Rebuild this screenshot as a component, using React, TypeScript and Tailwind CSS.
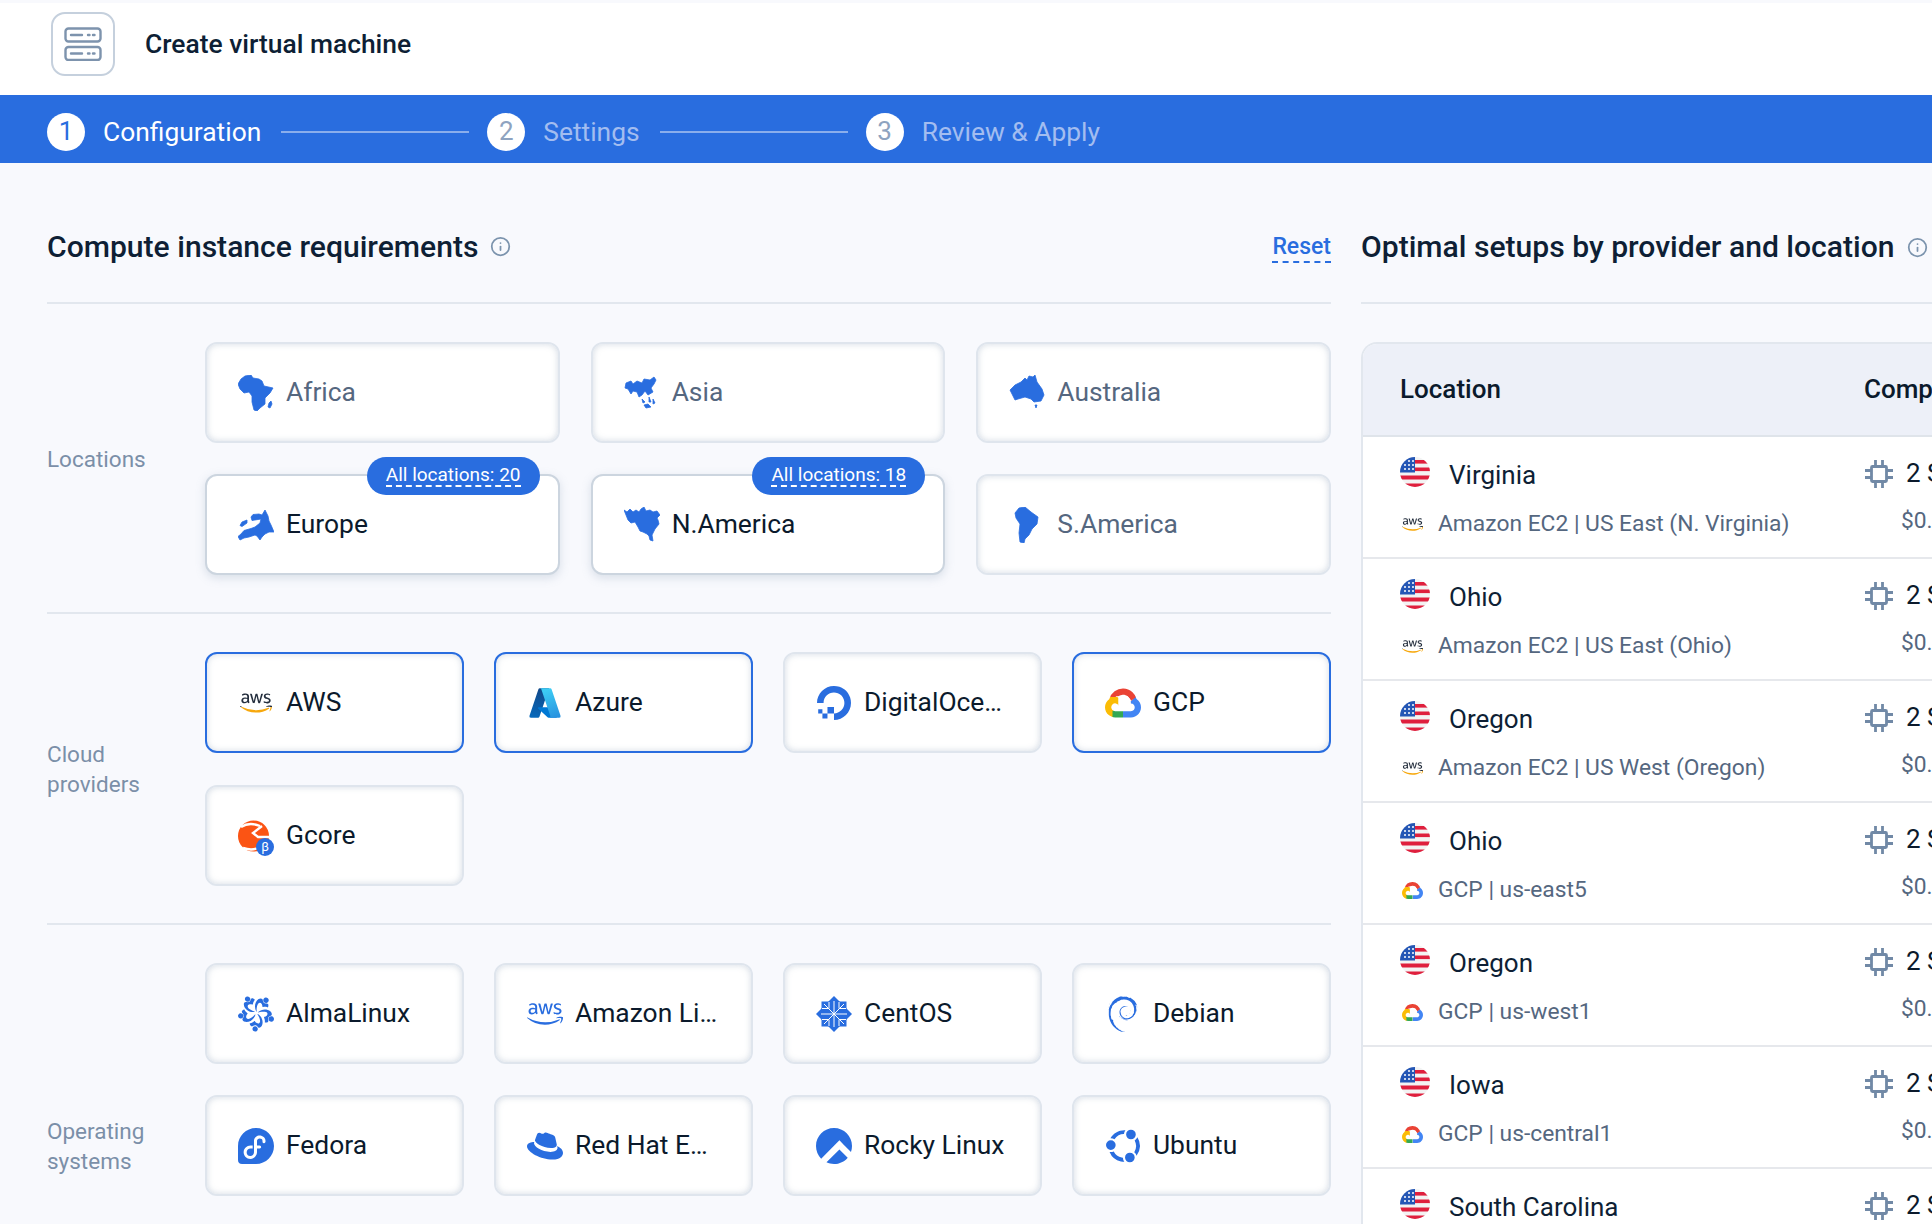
import type { ReactNode } from 'react';
import { Info } from 'lucide-react';
import { FaAws } from 'react-icons/fa';
import {
  SiAlmalinux,
  SiDebian,
  SiDigitalocean,
  SiFedora,
  SiRedhat,
  SiRockylinux,
  SiUbuntu,
} from 'react-icons/si';

const BLUE = '#296ddf';

const ServerIcon = () => (
  <svg width="38" height="34" viewBox="0 0 38 34" fill="none" stroke="#7d93ad" strokeWidth="2.4" strokeLinecap="round">
    <rect x="1.5" y="1.5" width="35" height="13" rx="3" />
    <rect x="1.5" y="20" width="35" height="13" rx="3" />
    <path d="M7 8h11M24 8h1.5M29 8h1.5M7 26.5h11M24 26.5h1.5M29 26.5h1.5" />
  </svg>
);

const CpuIcon = () => (
  <svg width="30" height="30" viewBox="0 0 30 30" fill="none" stroke="#7189a6" strokeWidth="2.8" className="shrink-0">
    <rect x="7.5" y="7.5" width="15" height="15" rx="1" />
    <path d="M11.5 1v6M18.5 1v6M11.5 23v6M18.5 23v6M1 11.5h6M1 18.5h6M23 11.5h6M23 18.5h6" />
  </svg>
);

const UsFlag = () => (
  <svg width="30" height="30" viewBox="0 0 30 30" className="shrink-0">
    <defs>
      <clipPath id="flag-circle">
        <circle cx="15" cy="15" r="15" />
      </clipPath>
    </defs>
    <g clipPath="url(#flag-circle)">
      <rect width="30" height="30" fill="#f3f3f3" />
      <rect y="3" x="12" width="18" height="3.6" fill="#df1f3d" />
      <rect y="10.5" x="12" width="18" height="3.6" fill="#df1f3d" />
      <rect y="18.5" width="30" height="4" fill="#df1f3d" />
      <rect y="26.5" width="30" height="4" fill="#df1f3d" />
      <rect width="15" height="15.5" fill="#2456b5" />
      <g fill="#fff">
        <circle cx="5" cy="8" r="1" />
        <circle cx="9" cy="8" r="1" />
        <circle cx="13" cy="8" r="1" />
        <circle cx="5" cy="12" r="1" />
        <circle cx="9" cy="12" r="1" />
        <circle cx="13" cy="12" r="1" />
        <circle cx="9" cy="4" r="1" />
        <circle cx="13" cy="4" r="1" />
      </g>
    </g>
  </svg>
);

// continents, hand traced in a 36 box
const continents: Record<string, string[]> = {
  Africa: [
    'M7 1L13 0L15 3L21 4L24 6L26 11L35 13L32 18L27 23L27 29L22 33L19 36L16 35L14 27L14 21L11 17L6 18L2 14L0 9L3 4Z',
    'M33 26L34 29L32 33L30 32L31 28Z',
  ],
  Asia: [
    'M2 8L7 6L9 9L13 6L18 8L20 4L26 5L30 2L32 5L30 9L27 13L29 17L24 20L21 16L18 20L15 22L13 17L9 16L7 19L4 14L1 13Z',
    'M18 24L21 27L19 28Z',
    'M25 22L27 27L25 27Z',
    'M20 30L24 29L27 32L22 33Z',
    'M29 24L31 28L29 29Z',
  ],
  Australia: [
    'M16 3L18 5L20 1L24 2L26 0L28 7L33 14L35 20L32 26L25 27L22 24L16 22L9 24L6 25L3 19L1 15L6 10L12 7Z',
    'M26 30L28 30L27 33Z',
  ],
  Europe: [
    'M27 3L30 9L31 14L33 18L36 25L31 25L27 27L24 30L22 33L19 29L17 28L11 30L6 31L2 33L0 29.5L3 27L6 23.5L13 21.5L17 20L22 16L23 12L14 13.5L13 10L15 7.5L21 7L24 8Z',
    'M2 18.5L4 15L9 13L9 16L4 19.5Z',
  ],
  'N.America': [
    'M0 3L3 5L6 2L9 5L12 3L15 5L17 2L20 0L22 4L26 3L29 5L33 4L36 8L33 11L34 13L35 17L31 22L28 28L29 34L26 33L25 29L23 27L19 25L16 24L14 20L11 15L7 16L4 13L2 8Z',
  ],
  'S.America': [
    'M10 1L16 0L22 5L29 10L28 17L23 22L20 28L16 32L15 36L11 35L10 26L11 17L7 11L6 6Z',
  ],
};

const Continent = ({ name }: { name: string }) => (
  <svg width="36" height="36" viewBox="0 0 36 36" fill={BLUE} stroke={BLUE} strokeWidth="0.8" strokeLinejoin="round">
    {continents[name].map((d) => (
      <path key={d} d={d} />
    ))}
  </svg>
);

const CentosLogo = () => (
  <svg width="36" height="36" viewBox="0 0 36 36">
    <g fill={BLUE}>
      <rect x="5.5" y="5.5" width="25" height="25" />
      {[0, 90, 180, 270].map((r) => (
        <path key={r} transform={`rotate(${r} 18 18)`} d="M18 0L24 6H12Z" />
      ))}
    </g>
    <g stroke="#fff" strokeWidth="1" fill="none">
      <path d="M18 5V31M5 18H31M8 8L28 28M28 8L8 28" />
      <path d="M13 6V12.5H6M23 6V12.5H30M13 30V23.5H6M23 30V23.5H30" />
    </g>
  </svg>
);

const AwsLogo = ({ size = 32 }: { size?: number }) => (
  <span className="relative inline-flex">
    <FaAws size={size} color="#252f3e" className="[clip-path:inset(0_0_36%_0)]" />
    <FaAws size={size} color="#f7a80d" className="absolute left-0 top-0 [clip-path:inset(64%_0_0_0)]" />
  </span>
);

const AzureLogo = () => (
  <svg width="34" height="34" viewBox="0 0 96 96">
    <defs>
      <linearGradient id="az-a" x1="38" y1="12" x2="12" y2="90" gradientUnits="userSpaceOnUse">
        <stop stopColor="#114a8b" />
        <stop offset="1" stopColor="#0669bc" />
      </linearGradient>
      <linearGradient id="az-b" x1="60" y1="10" x2="88" y2="86" gradientUnits="userSpaceOnUse">
        <stop stopColor="#3ccbf4" />
        <stop offset="1" stopColor="#2892df" />
      </linearGradient>
    </defs>
    <path fill="url(#az-a)" d="M33.338 6.544h26.038l-27.03 80.087a4.152 4.152 0 0 1-3.933 2.824H8.149a4.145 4.145 0 0 1-3.928-5.47L29.404 9.368a4.152 4.152 0 0 1 3.934-2.825z" />
    <path fill="#0078d4" d="M71.175 60.261h-41.29a1.911 1.911 0 0 0-1.305 3.309l26.532 24.764a4.171 4.171 0 0 0 2.846 1.121h23.38z" />
    <path fill="url(#az-b)" d="M66.595 9.364a4.145 4.145 0 0 0-3.928-2.82H33.648a4.146 4.146 0 0 1 3.928 2.82l25.184 74.62a4.146 4.146 0 0 1-3.928 5.472h29.02a4.146 4.146 0 0 0 3.927-5.472z" />
  </svg>
);

const GCP_PATH =
  'M12.19 2.38a9.344 9.344 0 0 0-9.234 6.893c.053-.02-.055.013 0 0-3.875 2.551-3.922 8.11-.247 10.941l.006-.007-.007.03a6.717 6.717 0 0 0 4.077 1.356h5.173l.03.03h5.192c6.687.053 9.376-8.605 3.835-12.35a9.365 9.365 0 0 0-2.821-4.552l-.043.043.006-.05A9.344 9.344 0 0 0 12.19 2.38zm-.358 4.146c1.244-.04 2.518.368 3.486 1.15a5.186 5.186 0 0 1 1.862 4.078v.518c3.53-.07 3.53 5.262 0 5.193h-5.193l-.008.009v-.04H6.785a2.59 2.59 0 0 1-1.067-.23h.001a2.597 2.597 0 1 1 3.437-3.437l3.013-3.012A6.747 6.747 0 0 0 8.11 8.24c.018-.01.04-.026.054-.023a5.186 5.186 0 0 1 3.67-1.69z';

const GcpLogo = ({ size = 36 }: { size?: number }) => (
  <svg width={size} height={size} viewBox="0 0 24 24">
    <defs>
      <clipPath id="gc-red"><path d="M3 0H24V5.5L17.5 10.5L15 7.5H7L8 8.4L3 9.6Z" /></clipPath>
      <clipPath id="gc-blue"><path d="M17 11L24 4V24H12V17L17 16Z" /></clipPath>
      <clipPath id="gc-yellow"><path d="M0 8H9L9 15.5L5.7 17.5L5.5 24H0Z" /></clipPath>
      <clipPath id="gc-green"><path d="M5 17.2L12 17.2V24H5Z" /></clipPath>
    </defs>
    <path d={GCP_PATH} fill="#4285f4" clipPath="url(#gc-blue)" />
    <path d={GCP_PATH} fill="#ea4335" clipPath="url(#gc-red)" />
    <path d={GCP_PATH} fill="#fbbc05" clipPath="url(#gc-yellow)" />
    <path d={GCP_PATH} fill="#34a853" clipPath="url(#gc-green)" />
  </svg>
);

const GcoreLogo = () => (
  <span className="relative inline-flex h-9 w-9">
    <svg width="31" height="36" viewBox="0 0 31 36">
      <circle cx="15.5" cy="18" r="15.5" fill="#fb5414" />
      <g fill="none" stroke="#fff" strokeWidth="2.4">
        <path d="M3 9C9 5 15 5 22 8" />
        <path d="M5 30C11 32 17 32 22 29" />
        <path d="M24 8L15 15L20 19H31" />
      </g>
    </svg>
    <span className="absolute bottom-[-2px] right-0 flex h-[18px] w-[18px] items-center justify-center rounded-full bg-[#296ddf] text-[13px] leading-none text-white">
      β
    </span>
  </span>
);

const blue = (Icon: typeof SiFedora, size: number) => <Icon size={size} color={BLUE} />;

type CardProps = {
  icon: ReactNode;
  label: string;
  muted?: boolean;
  selected?: boolean;
  picked?: boolean;
  badge?: string;
};

const Card = ({ icon, label, muted, selected, picked, badge }: CardProps) => (
  <div
    className={
      'relative flex h-[101px] min-w-0 items-center rounded-xl border-2 bg-white pl-[31px] pr-[33px] ' +
      (selected
        ? 'border-[#296ddf] shadow-[inset_0_0_6px_rgba(125,147,173,0.35)]'
        : picked
          ? 'border-[#ccd5df] shadow-[0_3px_10px_rgba(125,147,173,0.25)]'
          : 'border-[#dfe5ed] shadow-[inset_0_0_6px_rgba(125,147,173,0.35)]')
    }
  >
    <span className="flex h-9 w-9 shrink-0 items-center justify-center">{icon}</span>
    <span className={'ml-3 min-w-0 truncate text-[26.4px] ' + (muted ? 'text-[#55677f]' : 'text-[#0b1a2c]')}>{label}</span>
    {badge && (
      <span className="absolute right-[18px] top-[-19px] flex h-[38px] w-[173px] items-center justify-center rounded-full bg-[#296ddf] text-[19px] text-white">
        <span className="border-b-2 border-dashed border-white leading-[20px]">{badge}</span>
      </span>
    )}
  </div>
);

const Section = ({ label, children, className }: { label: ReactNode; children: ReactNode; className: string }) => (
  <div className="flex items-center border-b-2 border-[#e2e7ee] pb-[37px] pt-[38px] last:border-b-0">
    <div className="w-[158px] shrink-0 text-[22.5px] leading-[30px] text-[#7b8fa8]">{label}</div>
    <div className={'grid flex-1 ' + className}>{children}</div>
  </div>
);

const steps = [
  { n: 1, label: 'Configuration', active: true },
  { n: 2, label: 'Settings' },
  { n: 3, label: 'Review & Apply' },
];

const rows = [
  { city: 'Virginia', provider: 'aws', detail: 'Amazon EC2 | US East (N. Virginia)' },
  { city: 'Ohio', provider: 'aws', detail: 'Amazon EC2 | US East (Ohio)' },
  { city: 'Oregon', provider: 'aws', detail: 'Amazon EC2 | US West (Oregon)' },
  { city: 'Ohio', provider: 'gcp', detail: 'GCP | us-east5' },
  { city: 'Oregon', provider: 'gcp', detail: 'GCP | us-west1' },
  { city: 'Iowa', provider: 'gcp', detail: 'GCP | us-central1' },
  { city: 'South Carolina', provider: 'gcp', detail: 'GCP | us-east1' },
];

export default function App() {
  return (
    <div className="h-[1224px] w-[1932px] overflow-hidden bg-[#f8f9fd] pt-[3px] [font-family:Roboto,sans-serif]">
      {/* Title */}
      <header className="flex h-[92px] items-center bg-white pb-[10px] pl-[51px]">
        <div className="flex h-16 w-16 items-center justify-center rounded-[14px] border-2 border-[#c5d0dd]">
          <ServerIcon />
        </div>
        <h1 className="ml-[30px] mt-[2px] text-[26.4px] font-medium text-[#0e1f35]">Create virtual machine</h1>
      </header>

      {/* Stepper */}
      <nav className="flex h-[68px] items-center bg-[#296ddf] pl-[47px] pt-[6px]">
        {steps.map((step, i) => (
          <div key={step.n} className="flex items-center">
            {i > 0 && <div className="ml-[20px] mr-[18px] h-[2px] w-[188px] bg-[#8aaeec]" />}
            <div
              className={
                'flex h-[38px] w-[38px] items-center justify-center rounded-full bg-white text-[26px] ' +
                (step.active ? 'text-[#296ddf]' : 'text-[#8ea3c0]')
              }
            >
              {step.n}
            </div>
            <span className={'mt-[2px] text-[26.4px] ' + (step.active ? 'ml-[18px] text-white' : 'ml-[18px] text-[#a3bdf0]')}>{step.label}</span>
          </div>
        ))}
      </nav>

      <main className="flex pl-[47px]">
        {/* Requirements */}
        <section className="w-[1284px] shrink-0">
          <div className="mt-[59px] flex h-[50px] items-center justify-between">
            <div className="flex items-center">
              <h2 className="text-[30.1px] font-medium text-[#0e1f35]">Compute instance requirements</h2>
              <Info size={21} color="#7b93ad" className="ml-3" />
            </div>
            <span className="border-b-2 border-dashed border-[#296ddf] text-[23px] font-medium leading-[29px] text-[#296ddf]">Reset</span>
          </div>
          <div className="mt-[30px] border-t-2 border-[#e2e7ee]">
            <Section label="Locations" className="grid-cols-3 gap-x-[31px] gap-y-[31px]">
              <Card icon={<Continent name="Africa" />} label="Africa" muted />
              <Card icon={<Continent name="Asia" />} label="Asia" muted />
              <Card icon={<Continent name="Australia" />} label="Australia" muted />
              <Card icon={<Continent name="Europe" />} label="Europe" picked badge="All locations: 20" />
              <Card icon={<Continent name="N.America" />} label="N.America" picked badge="All locations: 18" />
              <Card icon={<Continent name="S.America" />} label="S.America" muted />
            </Section>
            <Section label={<>Cloud<br />providers</>} className="grid-cols-4 gap-x-[30px] gap-y-[32px]">
              <Card icon={<AwsLogo />} label="AWS" selected />
              <Card icon={<AzureLogo />} label="Azure" selected />
              <Card icon={blue(SiDigitalocean, 34)} label="DigitalOcean" />
              <Card icon={<GcpLogo />} label="GCP" selected />
              <Card icon={<GcoreLogo />} label="Gcore" />
            </Section>
            <Section label={<>Operating<br />systems</>} className="grid-cols-4 gap-x-[30px] gap-y-[31px]">
              <Card icon={blue(SiAlmalinux, 36)} label="AlmaLinux" />
              <Card icon={<FaAws size={38} color={BLUE} />} label="Amazon Linux" />
              <Card icon={<CentosLogo />} label="CentOS" />
              <Card icon={blue(SiDebian, 36)} label="Debian" />
              <Card icon={blue(SiFedora, 36)} label="Fedora" />
              <Card icon={blue(SiRedhat, 38)} label="Red Hat Enterprise Linux" />
              <Card icon={blue(SiRockylinux, 38)} label="Rocky Linux" />
              <Card icon={blue(SiUbuntu, 34)} label="Ubuntu" />
              {/* the list runs on below the fold */}
              <div className="col-span-4 h-[101px]" />
            </Section>
          </div>
        </section>

        {/* Optimal setups */}
        <section className="ml-[30px] w-[900px] shrink-0">
          <div className="mt-[59px] flex h-[50px] items-center">
            <h2 className="text-[30.1px] font-medium text-[#0e1f35]">Optimal setups by provider and location</h2>
            <Info size={21} color="#7b93ad" className="ml-3" />
          </div>
          <div className="mt-[30px] border-t-2 border-[#e2e7ee] pt-[38px]">
            <div className="overflow-hidden rounded-tl-2xl border-l-2 border-t-2 border-[#e2e7ee] bg-white">
              <div className="flex h-[93px] items-center border-b-2 border-[#dfe4ea] bg-[#edf0f8] pl-[37px] font-medium text-[#0b1a2c]">
                <div className="w-[464px] text-[26px]">Location</div>
                <div className="text-[26px]">Compute</div>
              </div>
              {rows.map((row, i) => (
                <div key={i} className="flex h-[122px] border-b-2 border-[#e6e8ec] pl-[37px] pt-[17px]">
                  <div className="-mt-[6px] w-[464px]">
                    <div className="flex items-center">
                      <UsFlag />
                      <span className="ml-[19px] pt-2 text-[26px] text-[#0e1f35]">{row.city}</span>
                    </div>
                    <div className="mt-[12px] flex items-center">
                      <span className="flex w-[38px] shrink-0 items-center justify-start pl-[2px]">
                        {row.provider === 'aws' ? <AwsLogo size={21} /> : <GcpLogo size={21} />}
                      </span>
                      <span className="text-[22.8px] text-[#55677f]">{row.detail}</span>
                    </div>
                  </div>
                  <div>
                    <div className="flex items-center">
                      <CpuIcon />
                      <span className="ml-3 text-[26px] text-[#0b1a2c]">2 Shared vCPU</span>
                    </div>
                    <div className="ml-[37px] mt-[11px] text-[22.8px] text-[#55677f]">$0.0316 / hour</div>
                  </div>
                </div>
              ))}
            </div>
          </div>
        </section>
      </main>
    </div>
  );
}
